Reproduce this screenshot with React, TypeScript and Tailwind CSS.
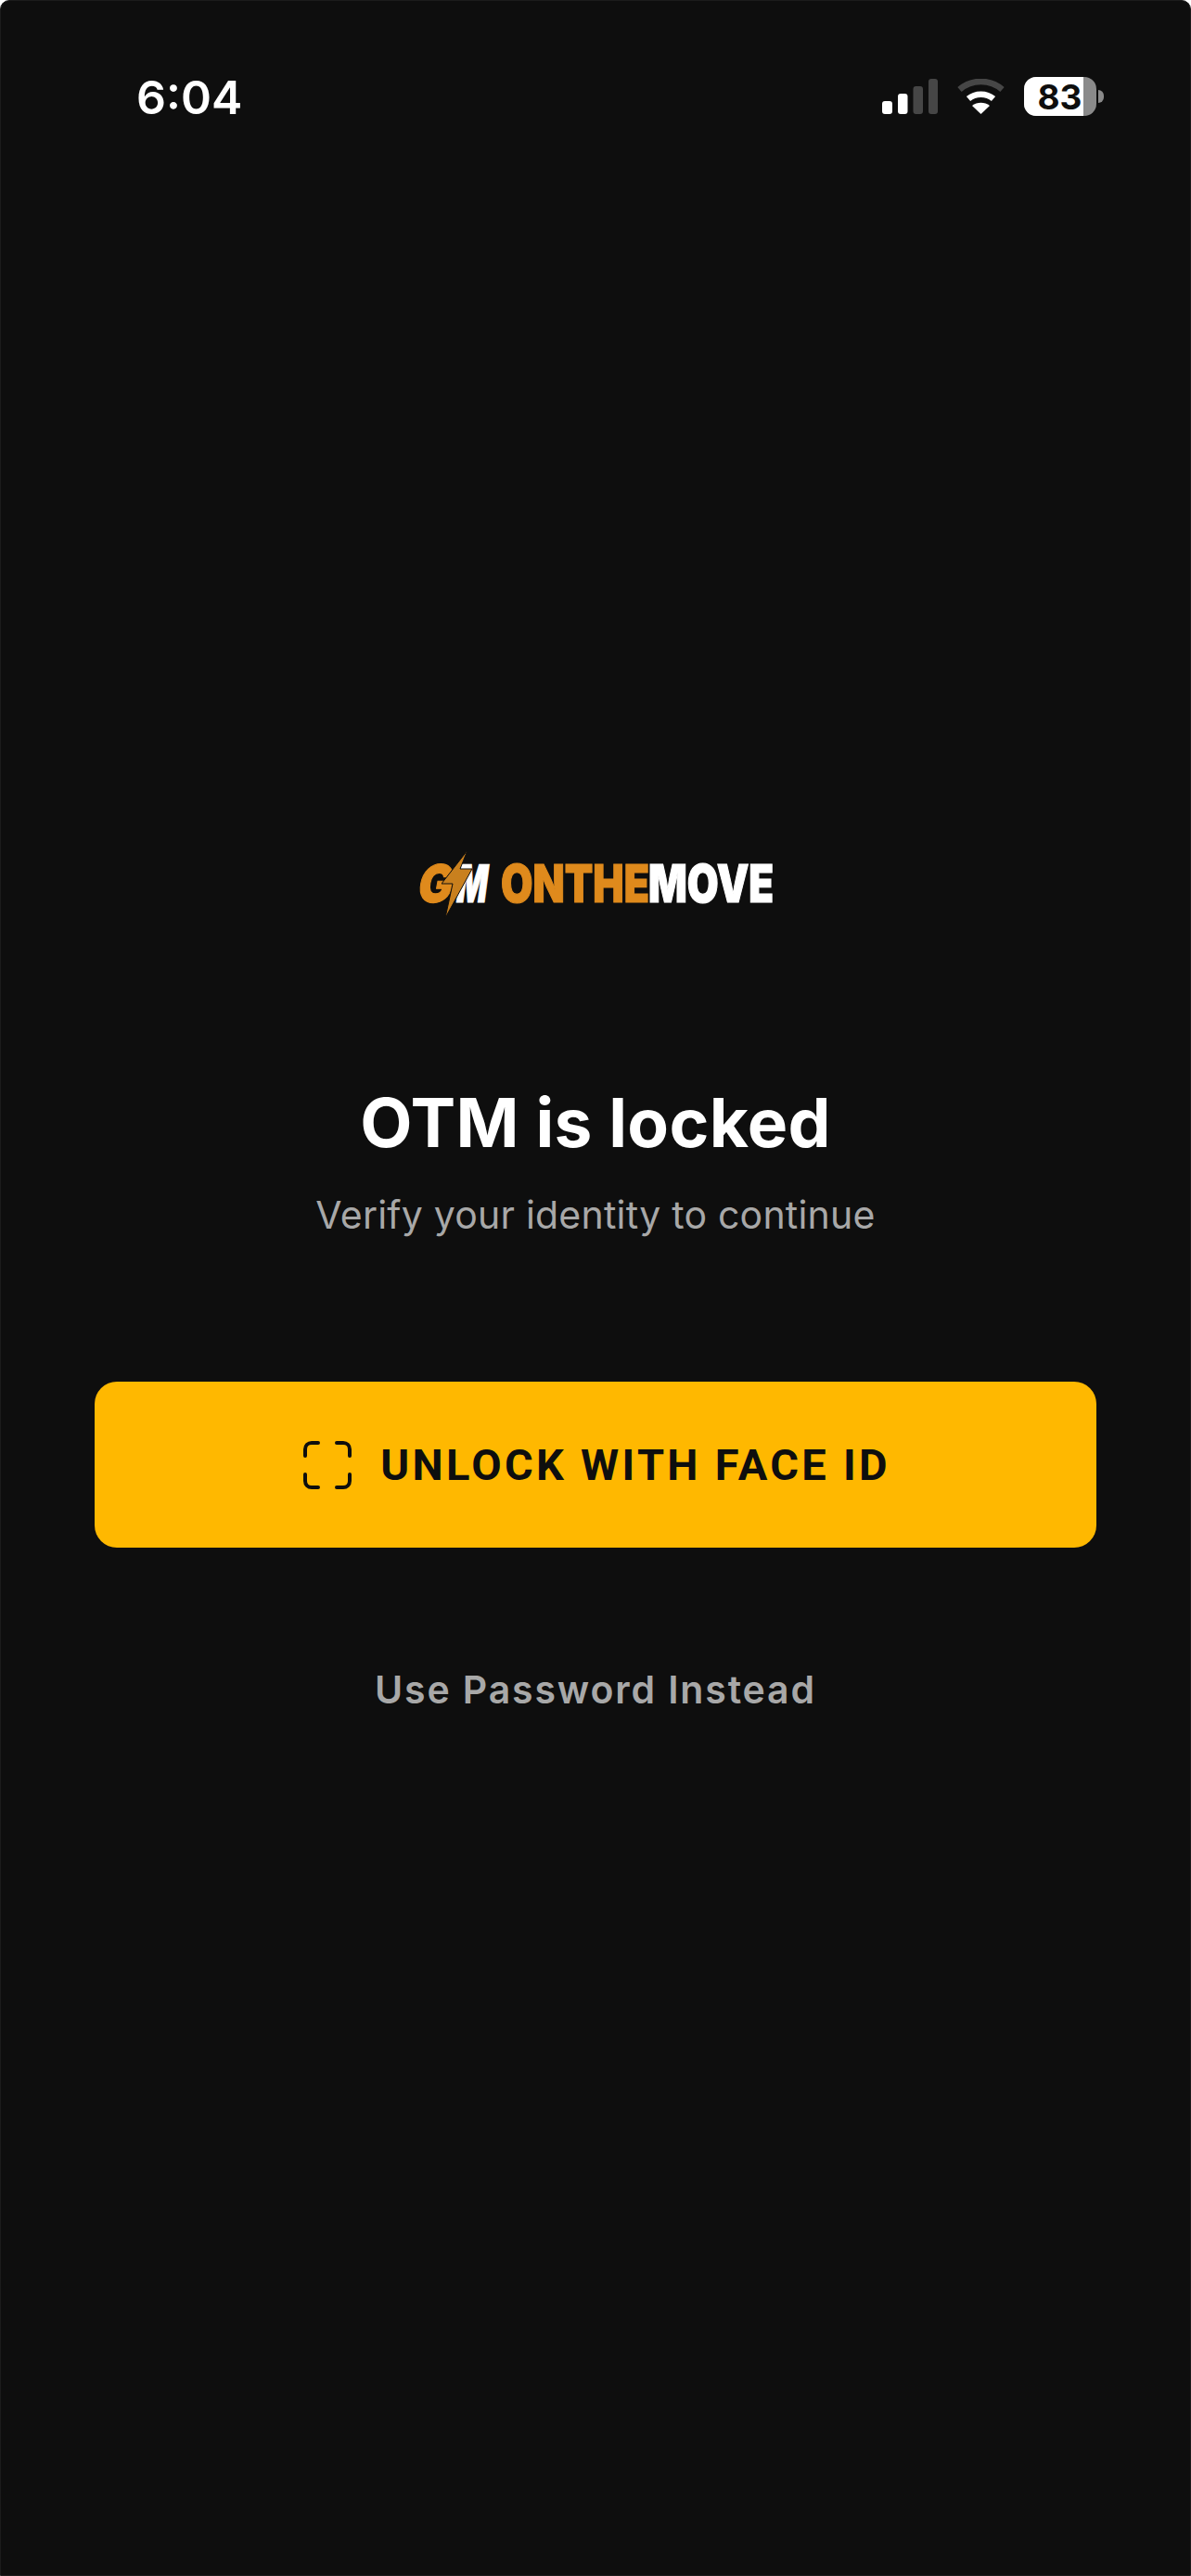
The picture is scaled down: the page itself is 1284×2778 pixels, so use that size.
function SignalIcon() {
  return (
    <svg width="60" height="38" viewBox="0 0 60 38" aria-hidden="true">
      <rect x="0" y="24" width="11" height="14" rx="3" fill="#fff" />
      <rect x="17" y="16" width="10.5" height="22" rx="3" fill="#fff" />
      <rect x="33.5" y="8" width="10.5" height="30" rx="3" fill="#464646" />
      <rect x="50" y="0" width="10" height="38" rx="3" fill="#464646" />
    </svg>
  );
}

function WifiIcon() {
  return (
    <svg width="51" height="38" viewBox="0 0 51 38" fill="none" aria-hidden="true">
      <path d="M2.5 11.5C15.5 0 35.5 0 48.5 11.5" stroke="#464646" strokeWidth="6.5" />
      <path d="M12 21.5C19.5 15 31.5 15 39 21.5" stroke="#fff" strokeWidth="6.5" />
      <path d="M25.5 38L16 29C21.5 24.6 29.5 24.6 35 29L25.5 38Z" fill="#fff" />
    </svg>
  );
}

function BatteryIcon() {
  return (
    <div className="flex items-center gap-[2px]">
      <div className="relative h-[42px] w-[78px] overflow-hidden rounded-[13px] bg-[#8a8a8a]">
        <div className="h-full w-[64px] bg-white" />
        <span className="absolute inset-0 flex items-center justify-center pr-[1px] text-[37px] leading-none font-bold text-[#0e0e0e]">
          83
        </span>
      </div>
      <div className="h-[14px] w-[6px] rounded-r-[6px] bg-[#8a8a8a]" />
    </div>
  );
}

function FaceIdIcon() {
  return (
    <svg width="52" height="52" viewBox="0 0 52 52" fill="none" stroke="#0e0e0e" strokeWidth="4" strokeLinecap="round" aria-hidden="true">
      <path d="M2 16V9C2 5 5 2 9 2H16" />
      <path d="M36 2H43C47 2 50 5 50 9V16" />
      <path d="M50 36V43C50 47 47 50 43 50H36" />
      <path d="M16 50H9C5 50 2 47 2 43V36" />
    </svg>
  );
}

function Logo() {
  const letters = "text-[56px] leading-[41px] font-black whitespace-nowrap [-webkit-text-stroke:1.2px_currentColor]";
  return (
    <div className="relative flex h-[73px] w-[381px] items-center">
      <div className="flex w-[88px] items-center">
        <span className={`${letters} w-[41px] origin-left scale-x-[0.88] -skew-x-12 text-[#df8a1c]`}>G</span>
        <span className={`${letters} w-[29px] origin-left scale-x-[0.62] -skew-x-12 text-white`}>M</span>
      </div>
      <span className={`${letters} w-[159px] origin-left scale-x-[0.795] text-[#df8a1c]`}>ONTHE</span>
      <span className={`${letters} w-[133px] origin-left scale-x-[0.78] text-white`}>MOVE</span>
      <svg className="absolute top-0 left-[24px]" width="34" height="73" viewBox="0 0 34 73" aria-hidden="true">
        <path d="M28 0L0 36H12L4 73L33 20H20L28 0Z" fill="#c9801e" stroke="#0e0e0e" strokeWidth="1" />
      </svg>
    </div>
  );
}

export default function App() {
  return (
    <div className="h-[2778px] w-[1284px] overflow-hidden rounded-t-[10px] border border-[#1c1c1c] bg-[#0e0e0e] font-['Inter',sans-serif]">
      <header className="flex h-[83px] items-start justify-between pt-[82px] pr-[93px] pl-[146px]">
        <span className="text-[50px] leading-[44px] font-semibold text-white">6:04</span>
        <div className="flex items-center gap-[21px]">
          <SignalIcon />
          <WifiIcon />
          <BatteryIcon />
        </div>
      </header>

      <main className="flex flex-col items-center px-[101px] pt-[833px]">
        <Logo />
        <h1 className="mt-[181px] text-[73px] leading-[80px] font-bold tracking-[0.3px] text-white">OTM is locked</h1>
        <p className="mt-[34px] text-[41px] leading-[50px] tracking-[0.22px] text-[#a8a8a8]">Verify your identity to continue</p>
        <button className="mt-[155px] flex h-[179px] w-full items-center justify-center gap-[31px] rounded-[24px] bg-[#ffb800] pl-[3px]">
          <FaceIdIcon />
          <span className="font-['Roboto',sans-serif] text-[47px] leading-none font-bold tracking-[3.3px] text-[#0e0e0e]">UNLOCK WITH FACE ID</span>
        </button>
        <button className="mt-[128px] text-[41px] leading-[50px] font-semibold tracking-[1.85px] text-[#a8a8a8]">
          Use Password Instead
        </button>
      </main>
    </div>
  );
}
